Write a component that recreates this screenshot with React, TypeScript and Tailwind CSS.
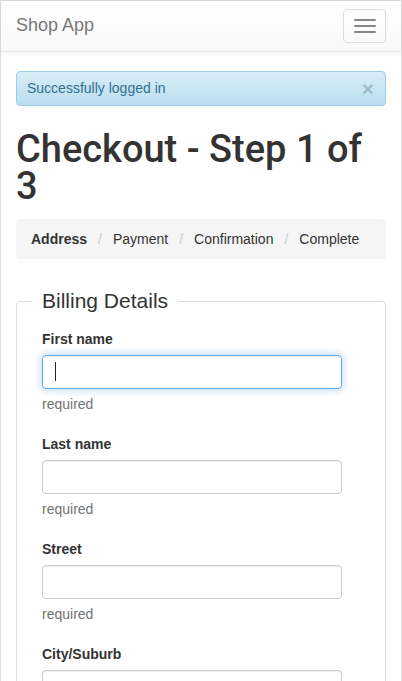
import React from 'react'

const fields = ['First name', 'Last name', 'Street', 'City/Suburb']

function Field({ label, focused }: { label: string; focused?: boolean }) {
  return (
    <div className="mb-[20px]">
      <label className="block font-bold text-[14px] leading-[20px] text-[#333] mb-[6px]">{label}</label>
      <div className="relative w-[300px]">
        <input
          type="text"
          className={
            focused
              ? 'block w-[300px] h-[34px] px-[12px] text-[14px] bg-white border border-[#66afe9] rounded-[4px] outline-none shadow-[inset_0_1px_1px_rgba(0,0,0,0.075),0_0_8px_rgba(102,175,233,0.6)]'
              : 'block w-[300px] h-[34px] px-[12px] text-[14px] bg-white border border-[#ccc] rounded-[4px] outline-none shadow-[inset_0_1px_1px_rgba(0,0,0,0.075)]'
          }
        />
        {focused && <span className="absolute left-[13px] top-[7px] h-[19px] w-px bg-[#222]" />}
      </div>
      <p className="mt-[5px] text-[14px] leading-[20px] text-[#737373]">required</p>
    </div>
  )
}

export default function App() {
  return (
    <div className="min-h-screen bg-white border-x border-t border-[#ddd] text-[#333] font-['Liberation_Sans',Arial,sans-serif]">
      {/* Navbar */}
      <nav className="h-[51px] flex items-start justify-between border-b border-[#e7e7e7] bg-gradient-to-b from-white to-[#f8f8f8] shadow-[0_1px_5px_rgba(0,0,0,0.075)]">
        <span className="pl-[15px] pt-[14px] text-[18px] leading-[20px] text-[#777]">Shop App</span>
        <button className="mt-[8px] mr-[15px] w-[43px] h-[34px] border border-[#ddd] rounded-[4px] flex flex-col items-center justify-center gap-[4px]">
          <span className="block w-[22px] h-[2px] bg-[#888] rounded-[1px]" />
          <span className="block w-[22px] h-[2px] bg-[#888] rounded-[1px]" />
          <span className="block w-[22px] h-[2px] bg-[#888] rounded-[1px]" />
        </button>
      </nav>

      <div className="px-[15px]">
        {/* Alert */}
        <div className="mt-[19px] h-[35px] flex items-center justify-between pl-[10px] pr-[11px] border border-[#9acfea] rounded-[4px] bg-gradient-to-b from-[#d9edf7] to-[#b9def0] text-[#31708f] text-[14px]">
          <span>Successfully logged in</span>
          <span className="text-[21px] font-bold leading-none text-black/20">×</span>
        </div>

        <h1 className="mt-[24.5px] mb-[14.5px] text-[38px] leading-[37px] font-medium text-[#333] font-['Roboto','Liberation_Sans',sans-serif]">
          Checkout - Step 1 of 3
        </h1>

        {/* Breadcrumb */}
        <ol className="h-[40px] flex items-center px-[15px] bg-[#f5f5f5] rounded-[4px] text-[14px] text-[#333]">
          <li className="font-bold">Address</li>
          <li className="px-[11px] text-[#ccc]">/</li>
          <li>Payment</li>
          <li className="px-[11px] text-[#ccc]">/</li>
          <li>Confirmation</li>
          <li className="px-[11px] text-[#ccc]">/</li>
          <li>Complete</li>
        </ol>

        <fieldset className="mt-[28px] border border-[#ddd] rounded-[4px] px-[25px] pt-[14px] pb-[10px]">
          <legend className="-ml-[10px] px-[10px] text-[21px] leading-[28px] text-[#333]">Billing Details</legend>
          {fields.map((f, i) => (
            <Field key={f} label={f} focused={i === 0} />
          ))}
        </fieldset>
      </div>
    </div>
  )
}
